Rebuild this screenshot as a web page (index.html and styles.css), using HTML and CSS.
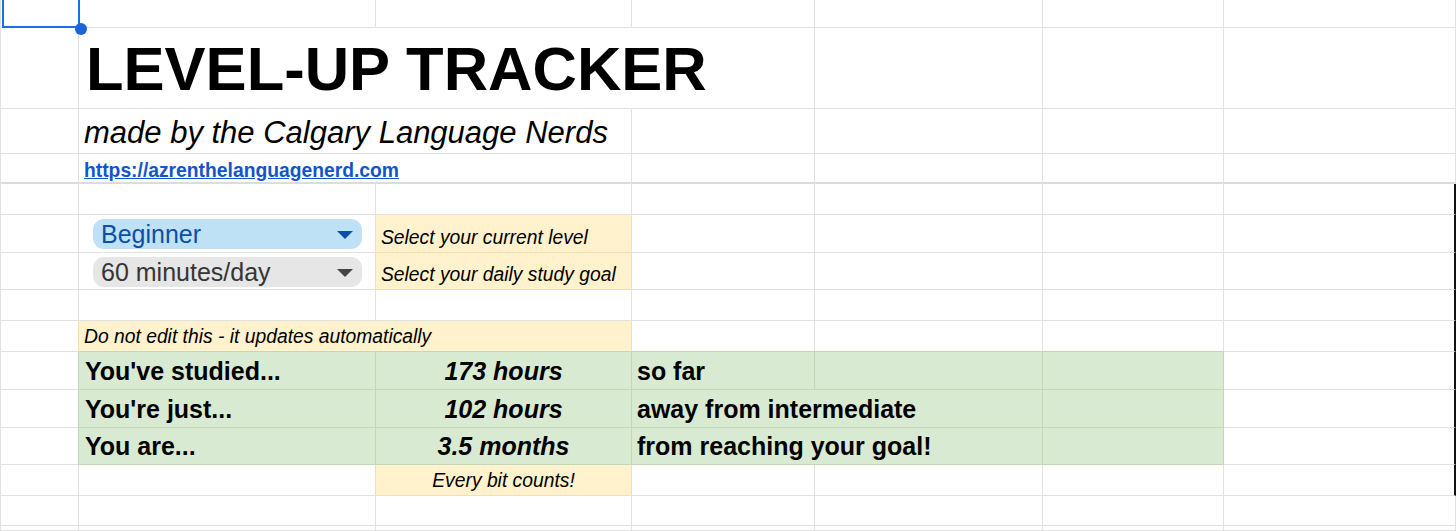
FILE: index.html
```html
<!DOCTYPE html>
<html lang="en">
<head>
<meta charset="utf-8">
<title>Level-Up Tracker</title>
<link rel="stylesheet" href="styles.css">
</head>
<body>
<div class="sheet">
  <!-- row 1 -->
  <div class="c a sel-cell"><div class="sel"></div><div class="handle"></div></div>
  <div class="c"></div><div class="c"></div><div class="c"></div><div class="c"></div><div class="c"></div><div class="c"></div>
  <!-- row 2 -->
  <div class="c a"></div>
  <div class="c span3 title">LEVEL-UP TRACKER</div>
  <div class="c"></div><div class="c"></div><div class="c"></div>
  <!-- row 3 -->
  <div class="c a"></div>
  <div class="c span2 subtitle">made by the Calgary Language Nerds</div>
  <div class="c"></div><div class="c"></div><div class="c"></div><div class="c"></div>
  <!-- row 4 -->
  <div class="c a thick"></div>
  <div class="c span2 thick"><a class="link" href="#">https://azrenthelanguagenerd.com</a></div>
  <div class="c thick"></div><div class="c thick"></div><div class="c thick"></div><div class="c thick"></div>
  <!-- row 5 -->
  <div class="c a"></div><div class="c"></div><div class="c"></div><div class="c"></div><div class="c"></div><div class="c"></div><div class="c edge"></div>
  <!-- row 6 -->
  <div class="c a"></div>
  <div class="c chip-cell"><div class="chip chip-blue"><span>Beginner</span><span class="arrow"></span></div></div>
  <div class="c note">Select your current level</div>
  <div class="c"></div><div class="c"></div><div class="c"></div><div class="c edge"></div>
  <!-- row 7 -->
  <div class="c a"></div>
  <div class="c chip-cell"><div class="chip chip-grey"><span>60 minutes/day</span><span class="arrow"></span></div></div>
  <div class="c note">Select your daily study goal</div>
  <div class="c"></div><div class="c"></div><div class="c"></div><div class="c edge"></div>
  <!-- row 8 -->
  <div class="c a"></div><div class="c"></div><div class="c"></div><div class="c"></div><div class="c"></div><div class="c"></div><div class="c edge"></div>
  <!-- row 9 -->
  <div class="c a"></div>
  <div class="c span2 note">Do not edit this - it updates automatically</div>
  <div class="c"></div><div class="c"></div><div class="c"></div><div class="c edge"></div>
  <!-- row 10 -->
  <div class="c a"></div>
  <div class="c g label">You've studied...</div>
  <div class="c g value">173 hours</div>
  <div class="c g label tail">so far</div>
  <div class="c g"></div><div class="c g"></div><div class="c edge"></div>
  <!-- row 11 -->
  <div class="c a"></div>
  <div class="c g label">You're just...</div>
  <div class="c g value">102 hours</div>
  <div class="c g span2 label tail">away from intermediate</div>
  <div class="c g"></div><div class="c edge"></div>
  <!-- row 12 -->
  <div class="c a"></div>
  <div class="c g label">You are...</div>
  <div class="c g value">3.5 months</div>
  <div class="c g span2 label tail">from reaching your goal!</div>
  <div class="c g"></div><div class="c edge"></div>
  <!-- row 13 -->
  <div class="c a"></div><div class="c"></div>
  <div class="c note center">Every bit counts!</div>
  <div class="c"></div><div class="c"></div><div class="c"></div><div class="c edge"></div>
  <!-- row 14 -->
  <div class="c a"></div><div class="c"></div><div class="c"></div><div class="c"></div><div class="c"></div><div class="c"></div><div class="c"></div>
  <!-- row 15 -->
  <div class="c a"></div><div class="c"></div><div class="c"></div><div class="c"></div><div class="c"></div><div class="c"></div><div class="c"></div>
</div>
</body>
</html>
```
FILE: styles.css
```css
* { box-sizing: border-box; }
html, body { margin: 0; padding: 0; background: #fff; overflow: hidden; }
body { font-family: "Liberation Sans", Arial, sans-serif; color: #000; }

.sheet {
  display: grid;
  grid-template-columns: 79px 297px 256px 183px 228px 181px 232px;
  grid-template-rows: 28px 81px 45px 30px 31px 38px 37px 31px 31px 38px 38px 37px 31px 30px 1fr;
  width: 1456px;
  height: 531px;
}

.c {
  border-right: 1px solid #e1e1e1;
  border-bottom: 1px solid #e1e1e1;
  display: flex;
  align-items: flex-end;
  padding: 0 5px 3px 5px;
  white-space: nowrap;
  min-width: 0;
  font-size: 19.3px;
}
.a { border-left: 1px solid #e1e1e1; }
.thick { border-bottom: 2px solid #dcdcdc; }
.edge { border-right: 2px solid #111; }
.span2 { grid-column: span 2; }
.span3 { grid-column: span 3; }

/* selection */
.sel-cell { position: relative; }
.sel {
  position: absolute;
  left: 1px; top: -2px;
  width: 78px; height: 30px;
  border: 2px solid #1a6ee6;
}
.handle {
  position: absolute;
  left: 74px; top: 23px;
  width: 12px; height: 12px;
  border-radius: 50%;
  background: #1a63d8;
  z-index: 2;
}

.title {
  font-size: 61.5px;
  font-weight: 700;
  padding-left: 7px;
  padding-bottom: 4px;
}
.subtitle {
  font-size: 31px;
  font-style: italic;
  padding-bottom: 2px;
}
.link {
  color: #1155cc;
  font-weight: 700;
  font-size: 19.3px;
  text-decoration: underline;
  margin-bottom: -3px;
}

/* dropdown chips */
.chip-cell {
  align-items: flex-start;
  padding: 4px 13px 0 14px;
}
.chip {
  flex: 1;
  height: 30px;
  border-radius: 11px;
  display: flex;
  align-items: center;
  justify-content: space-between;
  padding: 0 9px 0 8px;
  font-size: 25px;
}
.chip-blue { background: #bfe1f6; color: #0b4fa6; }
.chip-grey { background: #e6e6e6; color: #353535; }
.arrow {
  width: 0; height: 0;
  border-left: 8px solid transparent;
  border-right: 8px solid transparent;
  border-top: 8px solid currentColor;
  margin-top: 1px;
}
.chip-grey .arrow { border-top-color: #444; }

/* notes */
.note {
  background: #fff2cc;
  font-style: italic;
  border-right-color: #f1e0b0;
  border-bottom-color: #f1e0b0;
  box-shadow: -1px 0 0 #f1e0b0;
}
.center { justify-content: center; }

/* green results */
.g {
  background: #d9ead3;
  border-right-color: #c2d8b8;
  border-bottom-color: #c2d8b8;
  box-shadow: -1px 0 0 #c2d8b8, 0 -1px 0 #c2d8b8;
  align-items: center;
  font-size: 25px;
  font-weight: 700;
  padding-bottom: 0;
  padding-top: 1px;
}
.label { padding-left: 6px; }
.tail { padding-left: 5px; }
.value { font-style: italic; justify-content: center; }
```
